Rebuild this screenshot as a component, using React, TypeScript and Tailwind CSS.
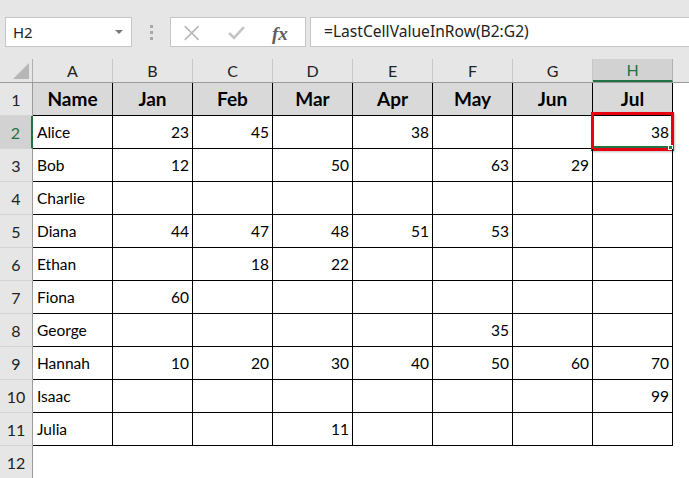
import React from 'react';

type Row = { name: string; vals: (number | null)[] };

const months = ['Jan', 'Feb', 'Mar', 'Apr', 'May', 'Jun', 'Jul'];
const letters = ['A', 'B', 'C', 'D', 'E', 'F', 'G', 'H'];

const rows: Row[] = [
  { name: 'Alice', vals: [23, 45, null, 38, null, null, 38] },
  { name: 'Bob', vals: [12, null, 50, null, 63, 29, null] },
  { name: 'Charlie', vals: [null, null, null, null, null, null, null] },
  { name: 'Diana', vals: [44, 47, 48, 51, 53, null, null] },
  { name: 'Ethan', vals: [null, 18, 22, null, null, null, null] },
  { name: 'Fiona', vals: [60, null, null, null, null, null, null] },
  { name: 'George', vals: [null, null, null, null, 35, null, null] },
  { name: 'Hannah', vals: [10, 20, 30, 40, 50, 60, 70] },
  { name: 'Isaac', vals: [null, null, null, null, null, null, 99] },
  { name: 'Julia', vals: [null, null, 11, null, null, null, null] },
];

const cellFont = { fontFamily: 'Lato, "Open Sans", sans-serif' };

const RowHeader = ({ n, active }: { n: number; active?: boolean }) => (
  <div
    className={
      'w-[33px] h-[33px] shrink-0 flex items-end justify-center pb-[3px] text-[16px] border-b border-[#d4d4d4] ' +
      (active
        ? 'bg-[#d2d2d2] text-[#217346] border-r-2 border-r-[#217346]'
        : 'bg-[#e6e6e6] text-[#222] border-r border-r-[#9b9b9b]')
    }
  >
    {n}
  </div>
);

export default function App() {
  return (
    <div className="w-[689px] h-[478px] overflow-hidden bg-white" style={cellFont}>
      {/* formula bar */}
      <div className="h-[59px] bg-[#e6e6e6] flex items-start pt-[17px] pl-[5px]">
        <div className="w-[127px] h-[30px] bg-white border border-[#c6c6c6] flex items-center justify-between pl-[7px] pr-[8px]">
          <span className="text-[15px] text-[#222]" style={{ fontFamily: '"Noto Sans", sans-serif' }}>
            H2
          </span>
          <span className="w-0 h-0 border-l-[4px] border-r-[4px] border-t-[4px] border-l-transparent border-r-transparent border-t-[#7a7a7a]" />
        </div>
        <div className="w-[38px] h-[30px] flex flex-col items-center justify-center gap-[3px]">
          <span className="w-[3px] h-[3px] bg-[#a8a8a8]" />
          <span className="w-[3px] h-[3px] bg-[#a8a8a8]" />
          <span className="w-[3px] h-[3px] bg-[#a8a8a8]" />
        </div>
        <div className="relative w-[136px] h-[30px] bg-white border border-[#c6c6c6] flex items-center">
          <svg width="136" height="28" viewBox="0 0 136 28">
            <path d="M14 8 L28 22 M28 8 L14 22" stroke="#b8b8b8" strokeWidth="1.6" fill="none" />
            <path d="M59 15 L64 20 L74 9" stroke="#c4c4c4" strokeWidth="2.6" fill="none" />
          </svg>
          <span
            className="absolute left-[101px] top-[2px] text-[19px] italic font-bold text-[#5e5e5e]"
            style={{ fontFamily: '"Liberation Serif", serif' }}
          >
            fx
          </span>
        </div>
        <div className="flex-1 h-[30px] ml-[4px] bg-white border border-[#c6c6c6] border-r-0 flex items-center pl-[13px]">
          <span className="text-[15.6px] text-[#222]" style={{ fontFamily: '"Noto Sans", sans-serif' }}>
            =LastCellValueInRow(B2:G2)
          </span>
        </div>
      </div>

      {/* column headers */}
      <div className="flex h-[24px] bg-[#e6e6e6] border-b border-[#9b9b9b]">
        <div className="w-[33px] shrink-0 border-r border-[#b0b0b0] flex items-end justify-end pr-[3px] pb-[3px]">
          <svg width="16" height="16" viewBox="0 0 16 16">
            <path d="M16 0 L16 16 L0 16 Z" fill="#b6b6b6" />
          </svg>
        </div>
        {letters.map((l) => (
          <div
            key={l}
            className={
              'w-[80px] shrink-0 flex items-center justify-center text-[16px] border-r ' +
              (l === 'H'
                ? 'bg-[#d2d2d2] text-[#217346] border-[#b0b0b0] border-b-2 border-b-[#217346]'
                : 'text-[#222] border-[#c8c8c8]')
            }
          >
            {l}
          </div>
        ))}
      </div>

      {/* row 1 */}
      <div className="flex">
        <RowHeader n={1} />
        {['Name', ...months].map((m) => (
          <div
            key={m}
            className="w-[80px] h-[33px] shrink-0 bg-[#d9d9d9] border-r border-b border-black flex items-center justify-center pt-[1px] text-[19px] font-bold text-black"
          >
            {m}
          </div>
        ))}
      </div>

      {rows.map((r, i) => (
        <div key={r.name} className="flex">
          <RowHeader n={i + 2} active={i === 0} />
          <div className="w-[80px] h-[33px] shrink-0 border-r border-b border-black flex items-center pl-[4px] pt-[2px] text-[15.5px] text-black">
            {r.name}
          </div>
          {r.vals.map((v, j) => (
            <div
              key={j}
              className="relative w-[80px] h-[33px] shrink-0 border-r border-b border-black flex items-center justify-end pr-[3px] pt-[2px] text-[15.5px] text-black"
            >
              {v}
              {i === 0 && j === 6 && (
                <>
                  <span className="absolute left-[-1px] right-[1px] top-[0px] bottom-[0px] border-b-2 border-[#217346]" />
                  <span className="absolute left-[-2px] right-[-2px] top-[-4px] bottom-[-3px] border-[3px] border-[#e60012] shadow-[1px_1px_2px_rgba(0,0,0,0.25)]" />
                  <span className="absolute right-[-1px] bottom-[-2px] w-[5px] h-[5px] bg-[#217346] border border-white" />
                </>
              )}
            </div>
          ))}
        </div>
      ))}

      <div className="flex">
        <RowHeader n={12} />
      </div>
    </div>
  );
}
